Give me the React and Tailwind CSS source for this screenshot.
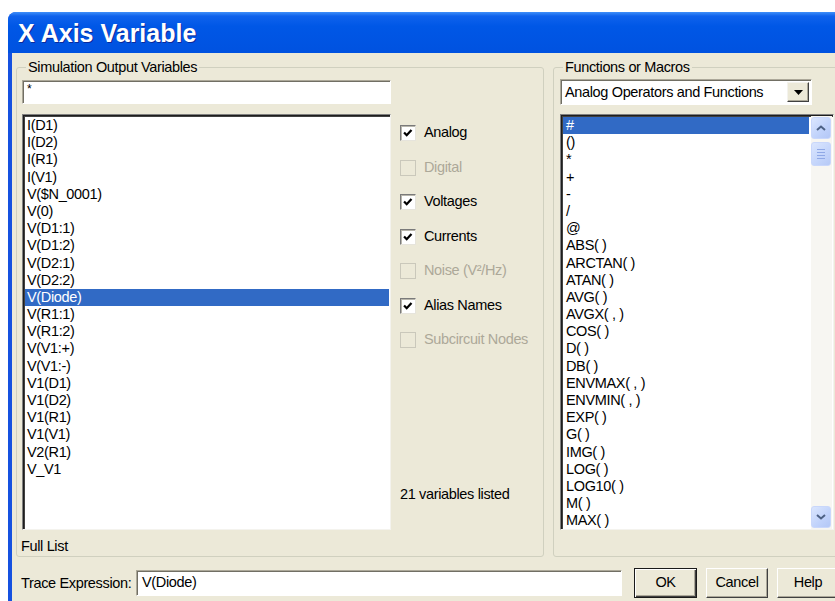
import React from "react";

const variables = [
  "I(D1)", "I(D2)", "I(R1)", "I(V1)", "V($N_0001)", "V(0)", "V(D1:1)", "V(D1:2)",
  "V(D2:1)", "V(D2:2)", "V(Diode)", "V(R1:1)", "V(R1:2)", "V(V1:+)", "V(V1:-)",
  "V1(D1)", "V1(D2)", "V1(R1)", "V1(V1)", "V2(R1)", "V_V1",
];

const functions = [
  "#", "()", "*", "+", "-", "/", "@", "ABS( )", "ARCTAN( )", "ATAN( )", "AVG( )",
  "AVGX( , )", "COS( )", "D( )", "DB( )", "ENVMAX( , )", "ENVMIN( , )", "EXP( )",
  "G( )", "IMG( )", "LOG( )", "LOG10( )", "M( )", "MAX( )",
];

const filters = [
  { label: "Analog", checked: true },
  { label: "Digital", disabled: true },
  { label: "Voltages", checked: true },
  { label: "Currents", checked: true },
  { label: "Noise (V²/Hz)", disabled: true },
  { label: "Alias Names", checked: true },
  { label: "Subcircuit Nodes", disabled: true },
];

function CheckBox({ checked, disabled }) {
  return (
    <div
      className={
        disabled
          ? "w-[16px] h-[16px] border border-[#cac8bb] bg-[#ece9d8]"
          : "w-[16px] h-[16px] border border-t-[#7a7a7a] border-l-[#7a7a7a] border-r-[#e6e4dc] border-b-[#e6e4dc] bg-white shadow-[inset_1px_1px_0_#b8b6ac]"
      }
    >
      {checked && (
        <svg viewBox="0 0 16 16" className="w-full h-full">
          <polyline points="3.5,7.5 6.5,10.5 12,4.5" fill="none" stroke="#000" strokeWidth="2.6" />
        </svg>
      )}
    </div>
  );
}

function ScrollButton({ dir }) {
  return (
    <div className="h-[22px] w-[20px] rounded-[3px] border border-[#c9d7fb] bg-[linear-gradient(135deg,#dbe6fe_0%,#c0d2fb_60%,#b3c7f6_100%)] flex items-center justify-center">
      <svg viewBox="0 0 10 6" className="w-[10px] h-[6px]">
        {dir === "up" ? (
          <polyline points="1,5 5,1.5 9,5" fill="none" stroke="#4d6185" strokeWidth="2" />
        ) : (
          <polyline points="1,1 5,4.5 9,1" fill="none" stroke="#4d6185" strokeWidth="2" />
        )}
      </svg>
    </div>
  );
}

export default function App() {
  return (
    <div className="w-[835px] h-[601px] bg-white overflow-hidden pt-[12px] pl-[8px] font-['Liberation_Sans',Arial,sans-serif] text-[14.5px] tracking-[-0.35px] text-black">
      <div className="w-[840px] h-[600px] rounded-tl-[8px] bg-[#1551e0] flex flex-col overflow-hidden">
        {/* title bar */}
        <div className="h-[41px] shrink-0 pl-[10px] flex items-center bg-[linear-gradient(to_bottom,#3f8ff9_0%,#0f62ec_10%,#0057e6_35%,#0052e0_100%)]">
          <span className="text-white font-bold text-[25px] tracking-normal leading-none pt-[2px] [text-shadow:1px_1px_0_#0b2a9a]">
            X Axis Variable
          </span>
        </div>

        {/* dialog body */}
        <div className="flex-1 ml-[4px] bg-[#ece9d8] flex flex-col">
          <div className="flex gap-[9px] pl-[4px] mt-[6px]">
            {/* Simulation Output Variables */}
            <fieldset className="w-[528px] h-[498px] border border-[#d0d0bf] rounded-[3px] shrink-0">
              <legend className="ml-[9px] px-[2px] leading-[17px]">Simulation Output Variables</legend>
              <div className="flex">
                <div className="ml-[5px] w-[369px] flex flex-col">
                  <div className="mt-[4px] h-[24px] bg-white border border-t-[#aca899] border-l-[#aca899] border-r-white border-b-white shadow-[inset_1px_1px_0_#716f64] pl-[4px] pt-[2px] text-[12px] leading-[12px]">
                    *
                  </div>
                  <div className="mt-[10px] h-[416px] bg-white border border-t-[#808080] border-l-[#808080] border-r-[#f4f3ee] border-b-[#f4f3ee] shadow-[inset_1px_1px_0_#1e1e1e,inset_2px_2px_0_#404040] pt-[2px] pl-[2px] pr-[1px] flex flex-col">
                    {variables.map((v) => (
                      <div
                        key={v}
                        className={
                          v === "V(Diode)"
                            ? "h-[17.2px] leading-[17.2px] pl-[2px] bg-[#316ac5] text-white"
                            : "h-[17.2px] leading-[17.2px] pl-[2px]"
                        }
                      >
                        {v}
                      </div>
                    ))}
                  </div>
                  <div className="mt-[8px] -ml-[1px] leading-[17px]">Full List</div>
                </div>

                <div className="ml-[9px] flex-1 flex flex-col pt-[40px]">
                  {filters.map((f) => (
                    <div key={f.label} className="h-[34.5px] flex items-center gap-[8px]">
                      <CheckBox checked={f.checked} disabled={f.disabled} />
                      <span className={f.disabled ? "text-[#aca899]" : ""}>{f.label}</span>
                    </div>
                  ))}
                  <div className="mt-[128px] leading-[17px]">21 variables listed</div>
                </div>
              </div>
            </fieldset>

            {/* Functions or Macros */}
            <fieldset className="w-[300px] h-[498px] border border-[#d0d0bf] rounded-[3px] shrink-0">
              <legend className="ml-[9px] px-[2px] leading-[17px]">Functions or Macros</legend>
              <div className="ml-[6px] flex flex-col">
                <div className="mt-[3px] w-[252px] h-[26px] bg-white border border-t-[#aca899] border-l-[#aca899] border-r-white border-b-white shadow-[inset_1px_1px_0_#716f64] flex items-center">
                  <span className="flex-1 pl-[4px] leading-[17px]">Analog Operators and Functions</span>
                  <div className="w-[22px] h-[20px] mr-[2px] bg-[#ece9d8] border border-t-[#f4f3ee] border-l-[#f4f3ee] border-r-[#404040] border-b-[#404040] shadow-[inset_-1px_-1px_0_#aca899] flex items-center justify-center">
                    <svg viewBox="0 0 9 5" className="w-[9px] h-[5px]">
                      <polygon points="0,0 9,0 4.5,5" fill="#000" />
                    </svg>
                  </div>
                </div>
                <div className="mt-[9px] w-[274px] h-[416px] bg-white border border-t-[#808080] border-l-[#808080] border-r-[#f4f3ee] border-b-[#f4f3ee] shadow-[inset_1px_1px_0_#1e1e1e,inset_2px_2px_0_#404040] pt-[1px] pl-[2px] flex">
                  <div className="flex-1 pt-[1px] flex flex-col">
                    {functions.map((f, i) => (
                      <div
                        key={f}
                        className={
                          i === 0
                            ? "h-[17.2px] leading-[17.2px] pl-[3px] bg-[#316ac5] text-white"
                            : "h-[17.2px] leading-[17.2px] pl-[3px]"
                        }
                      >
                        {f}
                      </div>
                    ))}
                  </div>
                  <div className="w-[21px] ml-[2px] mr-[1px] bg-[#f7f6f2] flex flex-col">
                    <div className="pt-[1px]">
                      <ScrollButton dir="up" />
                    </div>
                    <div className="mt-[3px] h-[24px] w-[20px] rounded-[3px] border border-[#c9d7fb] bg-[linear-gradient(135deg,#dbe6fe_0%,#c4d5fb_60%,#b6c9f6_100%)] flex flex-col items-center justify-center gap-[2px]">
                      <div className="w-[8px] h-px bg-[#8fa8e6]" />
                      <div className="w-[8px] h-px bg-[#8fa8e6]" />
                      <div className="w-[8px] h-px bg-[#8fa8e6]" />
                      <div className="w-[8px] h-px bg-[#8fa8e6]" />
                    </div>
                    <div className="flex-1" />
                    <div className="pb-[1px]">
                      <ScrollButton dir="down" />
                    </div>
                  </div>
                </div>
              </div>
            </fieldset>
          </div>

          {/* trace expression row */}
          <div className="mt-[11px] pl-[9px] flex items-center">
            <span className="w-[110px] shrink-0 whitespace-nowrap leading-[17px]">Trace Expression:</span>
            <div className="ml-[5px] w-[486px] shrink-0 h-[26px] bg-white border border-t-[#aca899] border-l-[#aca899] border-r-white border-b-white shadow-[inset_1px_1px_0_#716f64] pl-[5px] flex items-center">
              V(Diode)
            </div>
            <div className="ml-[12px] w-[63px] shrink-0 h-[30px] bg-[#ece9d8] border border-[#1a1a1a] shadow-[inset_1px_1px_0_#fff,inset_-1px_-1px_0_#404040,inset_-2px_-2px_0_#aca899] flex items-center justify-center">
              OK
            </div>
            <div className="ml-[9px] w-[62px] shrink-0 h-[30px] bg-[#ece9d8] border border-t-white border-l-white border-r-[#404040] border-b-[#404040] shadow-[inset_-1px_-1px_0_#aca899] flex items-center justify-center">
              Cancel
            </div>
            <div className="ml-[9px] w-[62px] shrink-0 h-[30px] bg-[#ece9d8] border border-t-white border-l-white border-r-[#404040] border-b-[#404040] shadow-[inset_-1px_-1px_0_#aca899] flex items-center justify-center">
              Help
            </div>
          </div>
        </div>
      </div>
    </div>
  );
}
